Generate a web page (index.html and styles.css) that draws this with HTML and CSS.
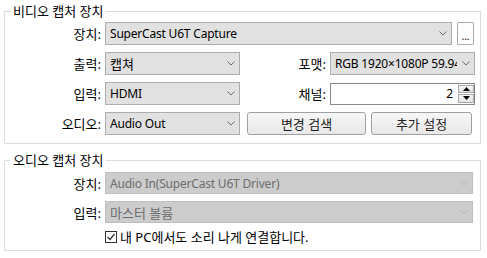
FILE: index.html
```html
<!DOCTYPE html>
<html>
<head>
<meta charset="utf-8">
<title>캡처 장치</title>
<link rel="stylesheet" href="styles.css">
</head>
<body>
	<fieldset class="group">
		<legend>비디오 캡처 장치</legend>
		<div class="grid video">
			<label class="lbl">장치:</label>
			<div class="device-row">
				<div class="combo device">
					<span>SuperCast U6T Capture</span>
					<i class="arrow"><svg width="8" height="5"><polyline points="0.5,0.5 4,4 7.5,0.5" /></svg></i>
				</div>
				<button class="more">...</button>
			</div>

			<label class="lbl">출력:</label>
			<div class="combo">
				<span class="ko">캡쳐</span>
				<i class="arrow"><svg width="8" height="5"><polyline points="0.5,0.5 4,4 7.5,0.5" /></svg></i>
			</div>
			<label class="lbl">포맷:</label>
			<div class="combo">
				<span>RGB 1920×1080P 59.94</span>
				<i class="arrow"><svg width="8" height="5"><polyline points="0.5,0.5 4,4 7.5,0.5" /></svg></i>
			</div>

			<label class="lbl">입력:</label>
			<div class="combo">
				<span>HDMI</span>
				<i class="arrow"><svg width="8" height="5"><polyline points="0.5,0.5 4,4 7.5,0.5" /></svg></i>
			</div>
			<label class="lbl">채널:</label>
			<div class="spin">
				<span class="value">2</span>
				<div class="spin-btns">
					<div class="spin-btn"><svg width="7" height="4"><polygon points="3.5,0 7,4 0,4" /></svg></div>
					<div class="spin-btn"><svg width="7" height="4"><polygon points="0,0 7,0 3.5,4" /></svg></div>
				</div>
			</div>

			<label class="lbl">오디오:</label>
			<div class="combo">
				<span>Audio Out</span>
				<i class="arrow"><svg width="8" height="5"><polyline points="0.5,0.5 4,4 7.5,0.5" /></svg></i>
			</div>
			<div class="btn-row">
				<button class="btn search">변경 검색</button>
				<button class="btn extra">추가 설정</button>
			</div>
		</div>
	</fieldset>

	<fieldset class="group audio-group">
		<legend>오디오 캡처 장치</legend>
		<div class="grid audio">
			<label class="lbl">장치:</label>
			<div class="combo disabled">
				<span>Audio In(SuperCast U6T Driver)</span>
				<i class="arrow"><svg width="8" height="5"><polyline points="0.5,0.5 4,4 7.5,0.5" /></svg></i>
			</div>

			<label class="lbl">입력:</label>
			<div class="combo disabled">
				<span class="ko">마스터 볼륨</span>
				<i class="arrow"><svg width="8" height="5"><polyline points="0.5,0.5 4,4 7.5,0.5" /></svg></i>
			</div>

			<span></span>
			<label class="check">
				<i class="box"><svg width="10" height="10"><polyline points="1.5,5 4,7.5 8.5,2" /></svg></i>
				<span>내 PC에서도 소리 나게 연결합니다.</span>
			</label>
		</div>
	</fieldset>
</body>
</html>
```

FILE: styles.css
```css
*{
	box-sizing: border-box;
}

body{
	margin: 0;
	background: #ffffff;
	color: #000000;
	font-family: "Noto Sans", "Noto Sans CJK KR", sans-serif;
	font-size: 12px;
}

.group{
	margin: 0 6px 0 4px;
	padding: 0;
	border: 1px solid #dcdcdc;
	min-width: 0;
}

.group legend{
	margin-left: 5px;
	padding: 0 3px;
	line-height: 22px;
	height: 22px;
	font-size: 13px;
}

.audio-group{
	margin-top: 5px;
}

.grid{
	display: grid;
	align-items: center;
}

.video{
	grid-template-columns: 96px 135px 82px 145px;
	grid-auto-rows: 23px;
	column-gap: 4px;
	row-gap: 7px;
	padding: 0 5px 8px 0;
}

.audio{
	grid-template-columns: 96px 1fr;
	grid-template-rows: 22px 22px 13px;
	column-gap: 4px;
	row-gap: 7px;
	padding: 1px 7px 7px 0;
}

.lbl{
	text-align: right;
	white-space: nowrap;
	font-size: 13px;
}

.ko{
	font-size: 13px;
}

.device-row{
	grid-column: 2 / 5;
	display: flex;
	gap: 5px;
	height: 23px;
}

.combo{
	display: flex;
	align-items: center;
	height: 100%;
	background: #e1e1e1;
	border: 1px solid #adadad;
	padding-left: 4px;
	overflow: hidden;
	letter-spacing: -0.2px;
}

.combo.device{
	width: 347px;
}

.combo span{
	flex: 1;
	white-space: nowrap;
	overflow: hidden;
}

.combo .ko{
	letter-spacing: 0;
}

.combo .arrow{
	flex: none;
	width: 17px;
	display: flex;
	justify-content: center;
	align-items: center;
}

.combo .arrow polyline{
	fill: none;
	stroke: #707070;
	stroke-width: 1;
}

.combo.disabled{
	background: #cccccc;
	border-color: #bfbfbf;
	color: #6d6d6d;
}

.combo.disabled .arrow polyline{
	stroke: #b5b5b5;
}

.more{
	width: 17px;
	height: 23px;
	padding: 0 0 3px;
	font: inherit;
	font-size: 10px;
	line-height: 1;
	display: flex;
	align-items: flex-end;
	justify-content: center;
	background: #fdfdfd;
	border: 1px solid #adadad;
	border-radius: 1px;
}

.spin{
	display: flex;
	height: 22px;
	background: #ffffff;
	border: 1px solid #828790;
}

.spin .value{
	flex: 1;
	text-align: right;
	padding-right: 5px;
	line-height: 20px;
}

.spin-btns{
	width: 16px;
	display: flex;
	flex-direction: column;
	gap: 1px;
	padding: 1px 0;
}

.spin-btn{
	flex: 1;
	display: flex;
	align-items: center;
	justify-content: center;
	border: 1px solid #a8a8a8;
	background: linear-gradient(#f6f6f6, #e2e2e2);
}

.spin-btn polygon{
	fill: #000000;
}

.btn-row{
	grid-column: 3 / 5;
	display: flex;
	gap: 5px;
	padding-left: 3px;
	height: 23px;
}

.btn{
	height: 23px;
	padding: 0;
	font: inherit;
	font-size: 13px;
	color: #1e1e1e;
	background: linear-gradient(#f7f7f7, #e8e8e8);
	border: 1px solid #a0a0a0;
	border-radius: 3px;
}

.btn.search{
	width: 119px;
}

.btn.extra{
	width: 101px;
}

.check{
	display: flex;
	align-items: center;
	gap: 3px;
	white-space: nowrap;
	font-size: 13px;
}

.check .box{
	flex: none;
	width: 12px;
	height: 12px;
	display: flex;
	align-items: center;
	justify-content: center;
	background: #ffffff;
	border: 1px solid #333333;
}

.check .box polyline{
	fill: none;
	stroke: #333333;
	stroke-width: 1.2;
}
```
